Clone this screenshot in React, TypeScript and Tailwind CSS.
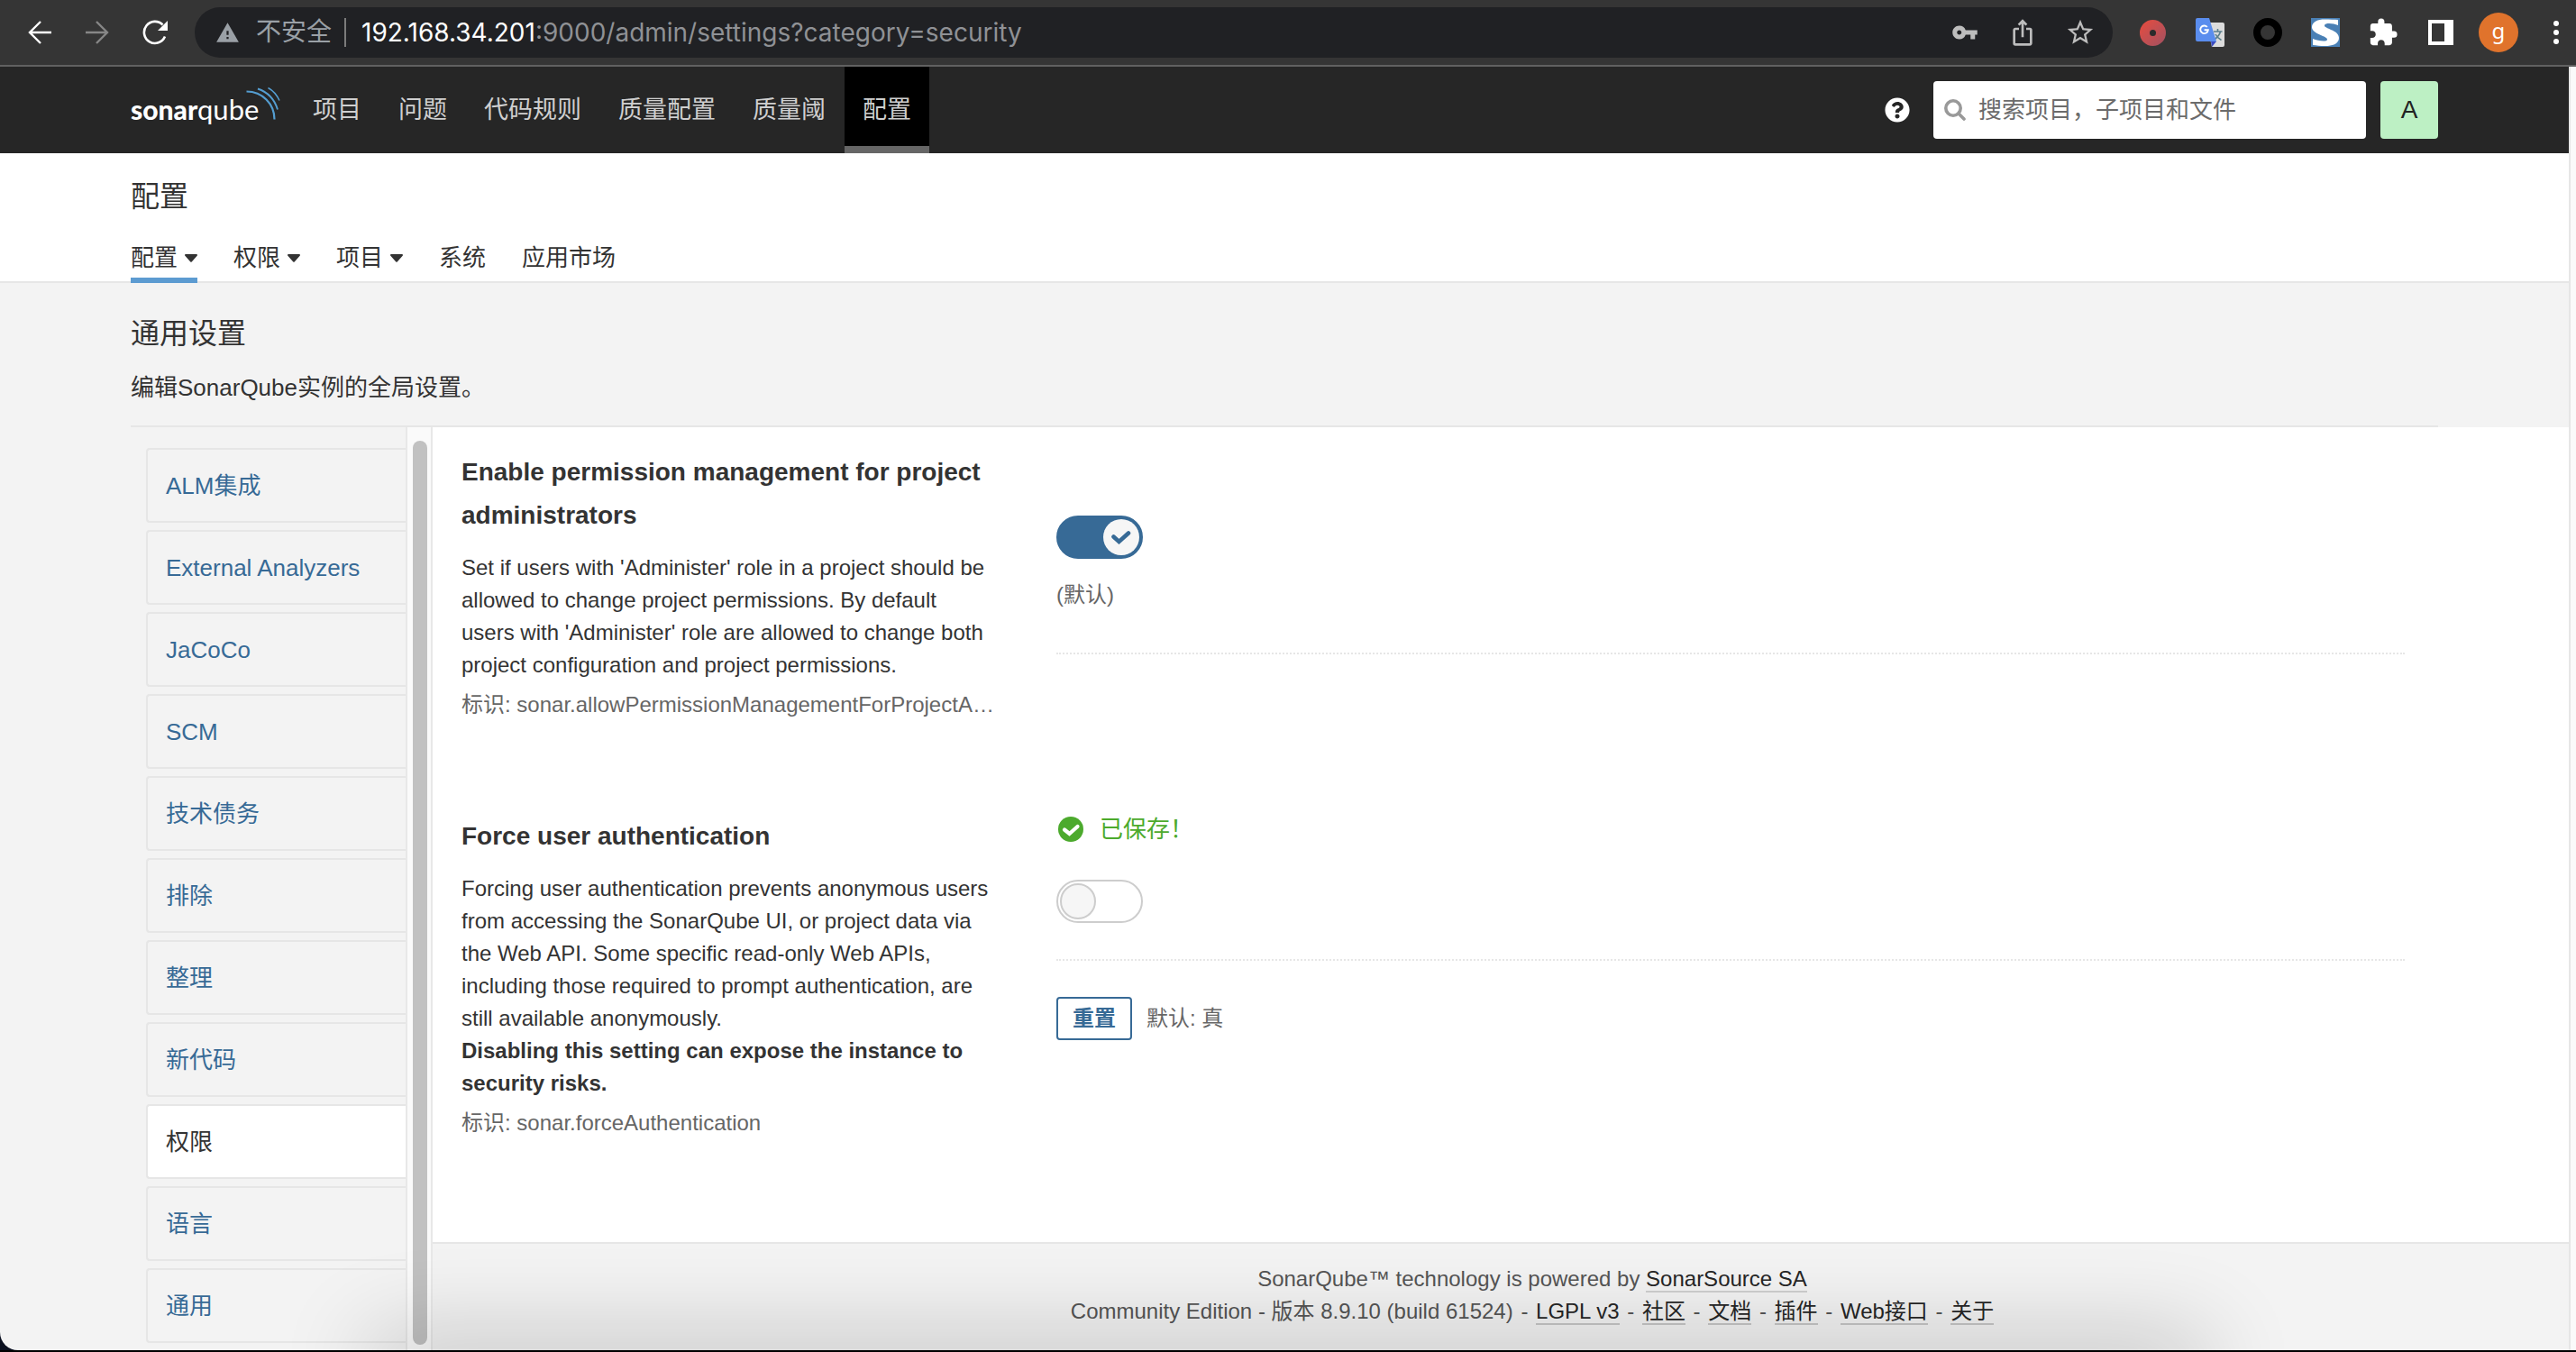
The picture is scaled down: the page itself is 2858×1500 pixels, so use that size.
import { useState } from 'react';
import { FaQuestionCircle } from 'react-icons/fa';
import { MdExtension, MdIosShare, MdStarBorder, MdVpnKey, MdWarning } from 'react-icons/md';

const navItems = ['项目', '问题', '代码规则', '质量配置', '质量阈', '配置'];

const tabs = [
  { label: '配置', caret: true },
  { label: '权限', caret: true },
  { label: '项目', caret: true },
  { label: '系统', caret: false },
  { label: '应用市场', caret: false },
];

const categories = [
  'ALM集成',
  'External Analyzers',
  'JaCoCo',
  'SCM',
  '技术债务',
  '排除',
  '整理',
  '新代码',
  '权限',
  '语言',
  '通用',
];

const footerLinks = ['LGPL v3', '社区', '文档', '插件', 'Web接口', '关于'];

function BackIcon({ className }: { className?: string }) {
  return (
    <svg viewBox="0 0 26 26" className={`size-[26px] ${className ?? ''}`} fill="none" stroke="currentColor" strokeWidth="2.4">
      <path d="M26 13H2M14 1 2 13l12 12" />
    </svg>
  );
}

function ReloadIcon() {
  return (
    <svg viewBox="0 0 28 28" className="size-7" fill="none">
      <path d="M25 18.5A12 12 0 1 1 22.5 5.5" stroke="#fff" strokeWidth="2.6" />
      <path d="M28 1v11H17z" fill="#fff" />
    </svg>
  );
}

function TranslateIcon() {
  return (
    <svg viewBox="0 0 32 32" className="size-8">
      <path d="M12 5h18a2 2 0 0 1 2 2v23a2 2 0 0 1-2 2H18z" fill="#dcdcdc" />
      <path d="M20 15h9.500M24.500 12v3M27.500 15c-1 4-4 7-7 9M22 18c1.500 3 4 5 6.500 6.500" stroke="#5b7f8c" strokeWidth="1.600" fill="none" />
      <path d="M17 26h6l-5 6z" fill="#3a4bc0" />
      <path d="M2 0h13l8 26H2a2 2 0 0 1-2-2V2a2 2 0 0 1 2-2z" fill="#5a8dee" />
      <path d="M12.800 10A4.300 4.300 0 1 0 13.800 13.300H9.600" stroke="#fff" strokeWidth="1.900" fill="none" />
    </svg>
  );
}

function StylusIcon() {
  return (
    <svg viewBox="0 0 32 32" className="size-8">
      <rect width="32" height="32" fill="#4a80b5" />
      <path
        d="M30 2v6c-5-2-14-3-15 0-1 4 16 5 16 14 0 7-8 9-15 9-6 0-10-.5-14-1v-7c5 2 15 4 16 1C19 20 1 18 1 10 1 4 8 1.500 15 1.500c6 0 11 .2 15 .5z"
        fill="#fff"
      />
    </svg>
  );
}

function Logo() {
  return (
    <svg viewBox="0 0 166 52" className="h-[52px] w-[166px] shrink-0" role="img" aria-label="sonarqube">
      <text x="0" y="37" fill="#fff" fontFamily="Lato, sans-serif" fontSize="30" fontWeight="900">
        sonar
      </text>
      <text x="74" y="37" fill="#fff" fontFamily="Lato, sans-serif" fontSize="31">
        qube
      </text>
      <g fill="none" stroke="#549dd0">
        <path d="M128.500 5.500C146 5.500 159.500 19 159.500 36.500" strokeWidth="2.200" />
        <path d="M141 2.500C151.500 6 159.500 14 163 25.500" strokeWidth="1.900" />
        <path d="M152.500 1.500C158 4.500 162 9 165 15.500" strokeWidth="1.500" />
      </g>
    </svg>
  );
}

function BrowserBar() {
  return (
    <div className="flex items-center border-b-2 border-[#616161] bg-[#353535] py-2">
      <div className="flex pl-3">
        <button aria-label="后退" className="flex h-14 w-16 items-center justify-center text-white">
          <BackIcon />
        </button>
        <button aria-label="前进" className="flex h-14 w-16 items-center justify-center text-[#868686]">
          <BackIcon className="rotate-180" />
        </button>
        <button aria-label="重新加载" className="flex h-14 w-16 items-center justify-center">
          <ReloadIcon />
        </button>
      </div>
      <div className="mx-3 flex h-14 min-w-0 flex-1 items-center rounded-full bg-[#202124] pr-1 pl-[23px] text-[28px]">
        <MdWarning className="size-[27px] shrink-0 text-[#9aa0a6]" />
        <span className="ml-[18px] shrink-0 text-[#9aa0a6]">不安全</span>
        <span className="ml-[14px] h-8 w-0.5 shrink-0 bg-[#7b7b7b]" />
        <span className="ml-[17px] min-w-0 flex-1 truncate font-['Inter',sans-serif] text-[#8f9195]">
          <span className="text-white">192.168.34.201</span>:9000/admin/settings?category=security
        </span>
        <button aria-label="密码" className="flex w-16 shrink-0 justify-center text-[#bdbdbd]">
          <MdVpnKey className="size-[30px]" />
        </button>
        <button aria-label="分享" className="flex w-16 shrink-0 justify-center text-[#bdbdbd]">
          <MdIosShare className="size-8" />
        </button>
        <button aria-label="收藏" className="flex w-16 shrink-0 justify-center text-[#bdbdbd]">
          <MdStarBorder className="size-[34px]" />
        </button>
      </div>
      <div className="flex items-center">
        <button aria-label="录制" className="flex w-16 justify-center">
          <span className="flex size-[29px] items-center justify-center rounded-full bg-linear-to-br from-[#e9493a] to-[#a05060]">
            <span className="size-[7px] rounded-full bg-[#2b2b2b]" />
          </span>
        </button>
        <button aria-label="翻译" className="flex w-16 justify-center">
          <TranslateIcon />
        </button>
        <button aria-label="圆环扩展" className="flex w-16 justify-center">
          <span className="size-8 rounded-full border-8 border-black" />
        </button>
        <button aria-label="样式扩展" className="flex w-16 justify-center">
          <StylusIcon />
        </button>
        <button aria-label="扩展程序" className="flex w-16 justify-center text-white">
          <MdExtension className="size-[34px]" />
        </button>
        <button aria-label="侧边栏" className="flex w-16 justify-center">
          <span className="size-7 border-4 border-r-[10px] border-white" />
        </button>
        <button aria-label="个人资料" className="flex w-16 justify-center">
          <span className="flex size-11 items-center justify-center rounded-full bg-[#e0732c] pb-1 font-['Noto_Sans',sans-serif] text-2xl text-white">
            g
          </span>
        </button>
        <button aria-label="菜单" className="mr-1.5 ml-4 flex w-8 flex-col items-center gap-1">
          <span className="size-1.5 rounded-full bg-white" />
          <span className="size-1.5 rounded-full bg-white" />
          <span className="size-1.5 rounded-full bg-white" />
        </button>
      </div>
    </div>
  );
}

function GlobalNav() {
  return (
    <nav className="bg-[#262626]">
      <div className="mx-auto flex h-24 max-w-[2560px] items-center">
        <a href="#home">
          <Logo />
        </a>
        <ul className="ml-4 flex h-full gap-px text-[27px] text-[#cfcfcf]">
          {navItems.map((item) => {
            const active = item === '配置';
            return (
              <li key={item} className="flex">
                <a
                  href={`#${item}`}
                  className={
                    active
                      ? 'flex items-center border-b-8 border-[#666] bg-black px-5 pt-2'
                      : 'flex items-center px-5'
                  }
                >
                  {item}
                </a>
              </li>
            );
          })}
        </ul>
        <button aria-label="帮助" className="ml-auto text-white">
          <FaQuestionCircle className="size-7" />
        </button>
        <div className="relative ml-[26px] w-[480px]">
          <svg viewBox="0 0 24 24" className="absolute top-5 left-3 size-6" fill="none" stroke="#999" strokeWidth="3.600">
            <circle cx="10" cy="10" r="8.200" />
            <path d="m16 16 6 6" strokeLinecap="round" />
          </svg>
          <input
            type="search"
            aria-label="搜索"
            placeholder="搜索项目，子项目和文件"
            className="h-16 w-full rounded bg-white pr-4 pl-[50px] text-[26px] text-[#333] placeholder:text-[#6b6b6b]"
          />
        </div>
        <button className="ml-4 size-16 rounded bg-[#bdf0c4] text-[28px] text-[#222]">A</button>
      </div>
    </nav>
  );
}

function SettingsTabs() {
  return (
    <header className="border-b-2 border-[#e6e6e6] bg-white">
      <div className="mx-auto max-w-[2560px] pt-[30px]">
        <h1 className="text-[32px] leading-9">配置</h1>
        <nav className="-mb-0.5 mt-8 flex gap-10">
          {tabs.map((tab, i) => (
            <a
              key={tab.label}
              href={`#${tab.label}`}
              className={
                i === 0
                  ? 'flex items-center gap-2 border-b-[6px] border-[#5c9bd1] pb-1 leading-9'
                  : 'flex items-center gap-2 border-b-[6px] border-transparent pb-1 leading-9'
              }
            >
              {tab.label}
              {tab.caret && (
                <svg viewBox="0 0 14 9" className="h-[9px] w-[14px]">
                  <path d="M1 0h12a1 1 0 0 1 .7 1.700L7.700 8.500a1 1 0 0 1-1.400 0L.3 1.700A1 1 0 0 1 1 0z" fill="#333" />
                </svg>
              )}
            </a>
          ))}
        </nav>
      </div>
    </header>
  );
}

function Sidebar() {
  return (
    <aside className="flex shrink-0 pl-[max(40px,calc((100%-2560px)/2))]">
      <ul className="ml-[17px] flex w-[288px] flex-col gap-2 pt-[23px] pb-2">
        {categories.map((name) => {
          const active = name === '权限';
          return (
            <li key={name}>
              <a
                href={`#${name}`}
                className={
                  active
                    ? 'flex h-[83px] items-center rounded-l border-2 border-r-0 border-[#e6e6e6] bg-white px-5'
                    : 'flex h-[83px] items-center rounded-l border-2 border-r-0 border-[#e6e6e6] px-5 text-[#376a96]'
                }
              >
                {name}
              </a>
            </li>
          );
        })}
      </ul>
      <div className="flex w-[30px] flex-col border-x-2 border-[#e8e8e8] bg-[#fafafa] pt-[15px] pb-1.5 pl-1.5">
        <div className="w-4 flex-1 rounded-full bg-[#c1c1c1]" />
      </div>
    </aside>
  );
}

function Toggle({ label, initial }: { label: string; initial: boolean }) {
  const [on, setOn] = useState(initial);
  return (
    <label className="inline-flex cursor-pointer">
      <input
        type="checkbox"
        aria-label={label}
        checked={on}
        onChange={(e) => setOn(e.target.checked)}
        className="sr-only"
      />
      <span
        className={
          on
            ? 'flex h-12 w-24 justify-end rounded-full border-2 border-[#376a96] bg-[#376a96] p-0.5'
            : 'flex h-12 w-24 justify-start rounded-full border-2 border-[#cdcdcd] bg-white p-0.5'
        }
      >
        <span
          className={
            on
              ? 'flex size-10 items-center justify-center rounded-full bg-[#f6f6f6]'
              : 'size-10 rounded-full border-2 border-[#cdcdcd] bg-[#f6f6f6]'
          }
        >
          {on && (
            <svg viewBox="0 0 22 17" className="h-[17px] w-[22px]" fill="none" stroke="#376a96" strokeWidth="4.600">
              <path d="M2.500 7.500 8.500 13 19 3.500" strokeLinecap="round" />
            </svg>
          )}
        </span>
      </span>
    </label>
  );
}

function Definitions() {
  return (
    <div className="flex flex-col gap-[104px] bg-white pt-[26px] pr-[182px] pb-[114px] pl-8">
      <section className="flex">
        <div className="w-[660px] shrink-0 pr-[66px]">
          <h3 className="text-[28px] leading-[48px] font-bold">
            Enable permission management for project administrators
          </h3>
          <p className="mt-4 max-w-[588px] text-2xl leading-9">
            Set if users with 'Administer' role in a project should be allowed to change project permissions. By default
            users with 'Administer' role are allowed to change both project configuration and project permissions.
          </p>
          <p className="mt-2 truncate text-2xl leading-9 text-[#666]">
            标识: sonar.allowPermissionManagementForProjectAdmins
          </p>
        </div>
        <div className="flex-1 pt-[72px]">
          <div className="flex">
            <Toggle label="Enable permission management for project administrators" initial />
          </div>
          <p className="mt-[22px] border-b-2 border-dotted border-[#e6e6e6] pb-[46px] text-2xl leading-9 text-[#666]">
            (默认)
          </p>
        </div>
      </section>
      <section className="flex">
        <div className="w-[660px] shrink-0 pr-[66px]">
          <h3 className="text-[28px] leading-[48px] font-bold">Force user authentication</h3>
          <p className="mt-4 max-w-[588px] text-2xl leading-9">
            Forcing user authentication prevents anonymous users from accessing the SonarQube UI, or project data via
            the Web API. Some specific read-only Web APIs, including those required to prompt authentication, are still
            available anonymously.
            <br />
            <strong>Disabling this setting can expose the instance to security risks.</strong>
          </p>
          <p className="mt-2 truncate text-2xl leading-9 text-[#666]">标识: sonar.forceAuthentication</p>
        </div>
        <div className="flex-1">
          <p className="flex h-8 items-center text-[#4caa2d]">
            <svg viewBox="0 0 28 28" className="mr-[18px] ml-0.5 size-7">
              <circle cx="14" cy="14" r="14" fill="#4caa2d" />
              <path
                d="M7 14.500 12.500 19 21.500 11"
                fill="none"
                stroke="#fff"
                strokeWidth="4.200"
                strokeLinecap="round"
              />
            </svg>
            已保存！
          </p>
          <div className="mt-10 flex border-b-2 border-dotted border-[#e6e6e6] pb-10">
            <Toggle label="Force user authentication" initial={false} />
          </div>
          <div className="mt-10 flex items-center gap-4 text-2xl">
            <button className="h-12 rounded border-2 border-[#376a96] px-4 font-semibold text-[#376a96]">重置</button>
            <span className="text-[#666]">默认: 真</span>
          </div>
        </div>
      </section>
    </div>
  );
}

function Footer() {
  return (
    <footer className="flex-1 border-t-2 border-[#e6e6e6] pt-[21px] pb-[25px] pl-[70px] text-center text-2xl leading-9 text-[#555]">
      <div>
        SonarQube™ technology is powered by{' '}
        <a href="#sonarsource" className="border-b-2 border-[#cfcfcf] text-[#262626]">
          SonarSource SA
        </a>
      </div>
      <div>
        Community Edition - 版本 8.9.10 (build 61524)
        {footerLinks.map((name) => (
          <span key={name}>
            {' '}
            <span className="mx-0.5">-</span>{' '}
            <a href={`#${name}`} className="border-b-2 border-[#c6c6c6] text-[#262626]">
              {name}
            </a>
          </span>
        ))}
      </div>
    </footer>
  );
}

export default function App() {
  return (
    <div className="relative flex min-h-screen flex-col border-b-2 border-black bg-[#0b1020] font-['Liberation_Sans','Noto_Sans_CJK_SC',sans-serif] text-[26px] leading-9 text-[#333]">
      <BrowserBar />
      <div className="relative flex flex-1 overflow-hidden rounded-bl-[20px] bg-[#f3f3f3]">
        <div className="flex min-w-0 flex-1 flex-col">
          <GlobalNav />
          <SettingsTabs />
          <div className="mx-auto w-full max-w-[2560px] border-b-2 border-[#e6e6e6] pt-[38px] pb-6">
            <h2 className="text-[32px] leading-9">通用设置</h2>
            <p className="mt-6">编辑SonarQube实例的全局设置。</p>
          </div>
          <div className="flex flex-1">
            <Sidebar />
            <main className="flex min-w-0 flex-1 flex-col">
              <Definitions />
              <Footer />
            </main>
          </div>
        </div>
        <div className="w-2 shrink-0 border-l-2 border-[#e6e6e6] bg-[#fafafa]" />
        <div className="pointer-events-none absolute inset-x-[430px] -bottom-[28px] h-5 shadow-[0_0_100px_20px_rgba(0,0,0,0.24)]" />
      </div>
    </div>
  );
}
